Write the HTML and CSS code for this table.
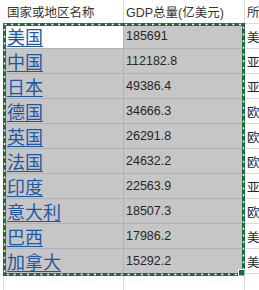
FILE: index.html
```html
<!DOCTYPE html>
<html lang="zh">
<head>
<meta charset="utf-8">
<link rel="stylesheet" href="styles.css">
</head>
<body>
<div class="sheet">
  <div class="row head">
    <div class="c stub"></div>
    <div class="c a">国家或地区名称</div>
    <div class="c b">GDP总量(亿美元)</div>
    <div class="c cc">所属大洲</div>
  </div>
  <div class="row sel active">
    <div class="c stub"></div>
    <div class="c a"><a href="#">美国</a></div>
    <div class="c b">185691</div>
    <div class="c cc">美洲</div>
  </div>
  <div class="row sel">
    <div class="c stub"></div>
    <div class="c a"><a href="#">中国</a></div>
    <div class="c b">112182.8</div>
    <div class="c cc">亚洲</div>
  </div>
  <div class="row sel">
    <div class="c stub"></div>
    <div class="c a"><a href="#">日本</a></div>
    <div class="c b">49386.4</div>
    <div class="c cc">亚洲</div>
  </div>
  <div class="row sel">
    <div class="c stub"></div>
    <div class="c a"><a href="#">德国</a></div>
    <div class="c b">34666.3</div>
    <div class="c cc">欧洲</div>
  </div>
  <div class="row sel">
    <div class="c stub"></div>
    <div class="c a"><a href="#">英国</a></div>
    <div class="c b">26291.8</div>
    <div class="c cc">欧洲</div>
  </div>
  <div class="row sel">
    <div class="c stub"></div>
    <div class="c a"><a href="#">法国</a></div>
    <div class="c b">24632.2</div>
    <div class="c cc">欧洲</div>
  </div>
  <div class="row sel">
    <div class="c stub"></div>
    <div class="c a"><a href="#">印度</a></div>
    <div class="c b">22563.9</div>
    <div class="c cc">亚洲</div>
  </div>
  <div class="row sel">
    <div class="c stub"></div>
    <div class="c a"><a href="#">意大利</a></div>
    <div class="c b">18507.3</div>
    <div class="c cc">欧洲</div>
  </div>
  <div class="row sel">
    <div class="c stub"></div>
    <div class="c a"><a href="#">巴西</a></div>
    <div class="c b">17986.2</div>
    <div class="c cc">美洲</div>
  </div>
  <div class="row sel">
    <div class="c stub"></div>
    <div class="c a"><a href="#">加拿大</a></div>
    <div class="c b">15292.2</div>
    <div class="c cc">美洲</div>
  </div>
  <div class="row tail">
    <div class="c stub"></div>
    <div class="c a"></div>
    <div class="c b"></div>
    <div class="c cc"></div>
  </div>
  <svg class="marquee" width="242" height="253" viewBox="0 0 242 253">
    <rect x="1.5" y="1.5" width="239" height="250" fill="none" stroke="#1e6b3f" stroke-width="3"/>
    <rect x="1.5" y="1.5" width="239" height="250" fill="none" stroke="#ffffff" stroke-width="1.4" stroke-dasharray="2 4.7"/>
    <rect x="235.5" y="246.5" width="6.5" height="6.5" fill="#1e6b3f" stroke="#ffffff" stroke-width="1"/>
  </svg>
</div>
</body>
</html>
```
FILE: styles.css
```css
* { box-sizing: border-box; }
html, body { margin: 0; padding: 0; background: #ffffff; }
body {
  width: 259px;
  height: 290px;
  overflow: hidden;
  font-family: "Liberation Sans", "Noto Sans CJK SC", sans-serif;
  font-size: 12.5px;
  color: #262626;
}
.sheet {
  position: relative;
  width: 259px;
  height: 290px;
}
.row {
  display: grid;
  grid-template-columns: 4px 120px 121px 14px;
  height: 25px;
}
.row.head { height: 24px; }
.row.tail { height: 16px; }
.c {
  border-right: 1px solid #dadada;
  border-bottom: 1px solid #dadada;
  display: flex;
  align-items: center;
  white-space: nowrap;
  overflow: hidden;
  background: #ffffff;
}
.stub { border-bottom: none; }
.row.head .stub { border-right: none; }
.a { padding-left: 3px; }
.b { padding-left: 2px; }
.cc { padding-left: 2px; border-right: none; }
.head .c { color: #333333; }
.sel .a, .sel .b {
  background: #c6c6c6;
  border-color: #b2b2b2;
}
.sel.active .a { background: #ffffff; }
.tail .c { border-bottom: none; }
.a a {
  font-family: "Noto Sans CJK SC", sans-serif;
  font-size: 18px;
  line-height: 22px;
  color: #1d58a6;
  text-decoration: underline;
  text-underline-offset: 2px;
}
.marquee {
  position: absolute;
  left: 3px;
  top: 23px;
}
```
